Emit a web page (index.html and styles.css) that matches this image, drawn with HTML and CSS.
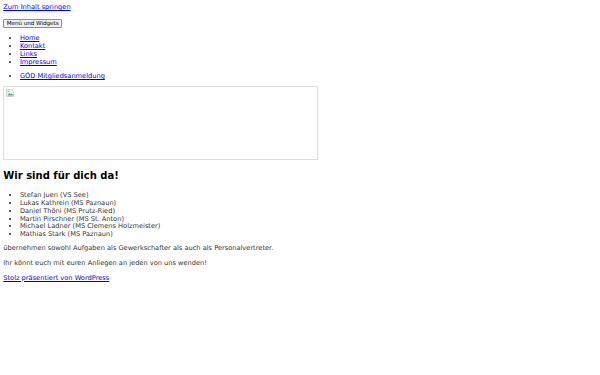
FILE: index.html
```html
<!DOCTYPE html>
<html lang="de">

<head>
    <meta charset="utf-8" />
    <title>Wir sind für dich da!</title>
    <link rel="stylesheet" href="styles.css">
</head>

<body>
    <a class="skip-link" href="#content">Zum Inhalt springen</a>

    <nav class="site-nav">
        <button type="button" class="menu-toggle">Menü und Widgets</button>

        <ul class="menu">
            <li><a href="#">Home</a></li>
            <li><a href="#">Kontakt</a></li>
            <li><a href="#">Links</a></li>
            <li><a href="#">Impressum</a></li>
        </ul>

        <ul class="menu">
            <li><a href="#">GÖD Mitgliedsanmeldung</a></li>
        </ul>
    </nav>

    <p class="banner">
        <span class="broken-img">
            <svg width="8" height="8" viewBox="0 0 16 16">
                <path d="M1 1h10l4 4v10H1z" fill="#eef3f8" stroke="#9aa9bb" stroke-width="1" />
                <path d="M3 13l4-5 3 3 2-2 2 4z" fill="#5aa83c" />
                <circle cx="5" cy="5" r="1.6" fill="#7fb0e0" />
            </svg>
        </span>
    </p>

    <main id="content">
        <h2>Wir sind für dich da!</h2>
        <ul class="team">
            <li>Stefan Juen (VS See)</li>
            <li>Lukas Kathrein (MS Paznaun)</li>
            <li>Daniel Thöni (MS Prutz-Ried)</li>
            <li>Martin Pirschner (MS St. Anton)</li>
            <li>Michael Ladner (MS Clemens Holzmeister)</li>
            <li>Mathias Stark (MS Paznaun)</li>
        </ul>
        <p>übernehmen sowohl Aufgaben als Gewerkschafter als auch als Personalvertreter.</p>
        <p>Ihr könnt euch mit euren Anliegen an jeden von uns wenden!</p>
    </main>

    <footer>
        <a href="#">Stolz präsentiert von WordPress</a>
    </footer>
</body>

</html>
```

FILE: styles.css
```css
body {
    margin: 3.3px;
    font-family: "DejaVu Sans", sans-serif;
    font-size: 6.65px;
    line-height: 8px;
    color: #333;
}

a {
    color: #00e;
}

.skip-link {
    display: block;
}

.menu-toggle {
    margin-top: 7.6px;
    font-family: "DejaVu Sans", sans-serif;
    font-size: 5.55px;
    line-height: 7px;
    padding: 0 2.5px;
    color: #000;
    background: #efefef;
    border: 1px solid #8f8f8f;
    border-radius: 1px;
}

ul {
    margin: 6.6px 0;
    padding-left: 16.6px;
}

.menu {
    margin-bottom: 5.6px;
}

.menu + .menu {
    margin-top: 5.6px;
}

.banner {
    margin: 5.6px 0 6.6px;
}

.broken-img {
    display: block;
    box-sizing: border-box;
    width: 315px;
    height: 74px;
    border: 1px solid #ddd;
    padding: 2px;
}

.broken-img svg {
    display: block;
}

h2 {
    margin: 10.3px 0;
    font-size: 10px;
    line-height: 12px;
    color: #000;
}

.team {
    line-height: 7.8px;
    margin-bottom: 4.6px;
}

p {
    margin: 6.9px 0;
}

.team + p {
    margin-top: 5px;
}

footer {
    margin-top: 6.6px;
}
```
